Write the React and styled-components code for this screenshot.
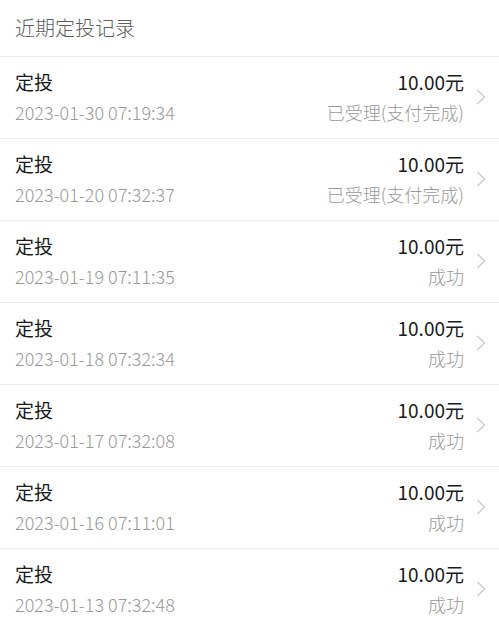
import styled, { createGlobalStyle } from "styled-components";

const GlobalStyle = createGlobalStyle`
	body {
		margin: 0;
		background: #fff;
		font-family: "Noto Sans CJK SC", "Noto Sans", sans-serif;
	}
`;

const records = [
	{ time: "2023-01-30 07:19:34", status: "已受理(支付完成)" },
	{ time: "2023-01-20 07:32:37", status: "已受理(支付完成)" },
	{ time: "2023-01-19 07:11:35", status: "成功" },
	{ time: "2023-01-18 07:32:34", status: "成功" },
	{ time: "2023-01-17 07:32:08", status: "成功" },
	{ time: "2023-01-16 07:11:01", status: "成功" },
	{ time: "2023-01-13 07:32:48", status: "成功" },
];

const Chevron = () => (
	<svg width="10" height="16" viewBox="0 0 10 16" fill="none">
		<path d="M1.5 1L8.5 8L1.5 15" stroke="#c9c9c9" strokeWidth="1.3" />
	</svg>
);

const App = () => {
	return (
		<Page>
			<GlobalStyle />
			<Header>近期定投记录</Header>
			<List>
				{records.map((r) => (
					<Row key={r.time}>
						<Left>
							<Title>定投</Title>
							<Sub>{r.time}</Sub>
						</Left>
						<Right>
							<Amount>10.00元</Amount>
							<Sub>{r.status}</Sub>
						</Right>
						<Arrow>
							<Chevron />
						</Arrow>
					</Row>
				))}
			</List>
		</Page>
	);
};

export default App;

const Page = styled.div`
	width: 499px;
	height: 618px;
	overflow: hidden;
	background: #fff;
`;

const Header = styled.div`
	height: 57px;
	display: flex;
	align-items: center;
	padding: 0 15px 2px;
	font-size: 20px;
	font-weight: 300;
	color: #5e5e5e;
	border-bottom: 1px solid #eeeeee;
	box-sizing: border-box;
`;

const List = styled.div`
	display: flex;
	flex-direction: column;
`;

const Row = styled.div`
	display: flex;
	align-items: center;
	height: 82px;
	padding: 0 13px 2px 15px;
	border-bottom: 1px solid #eeeeee;
	box-sizing: border-box;
`;

const Left = styled.div`
	flex: 1;
	display: flex;
	flex-direction: column;
	gap: 4px;
`;

const Right = styled.div`
	display: flex;
	flex-direction: column;
	align-items: flex-end;
	gap: 4px;
`;

const Title = styled.div`
	font-size: 19px;
	line-height: 26px;
	color: #1a1a1a;
`;

const Amount = styled(Title)``;

const Sub = styled.div`
	font-size: 18px;
	line-height: 26px;
	font-weight: 300;
	color: #999999;
`;

const Arrow = styled.div`
	display: flex;
	align-items: center;
	margin-left: 12px;
`;
